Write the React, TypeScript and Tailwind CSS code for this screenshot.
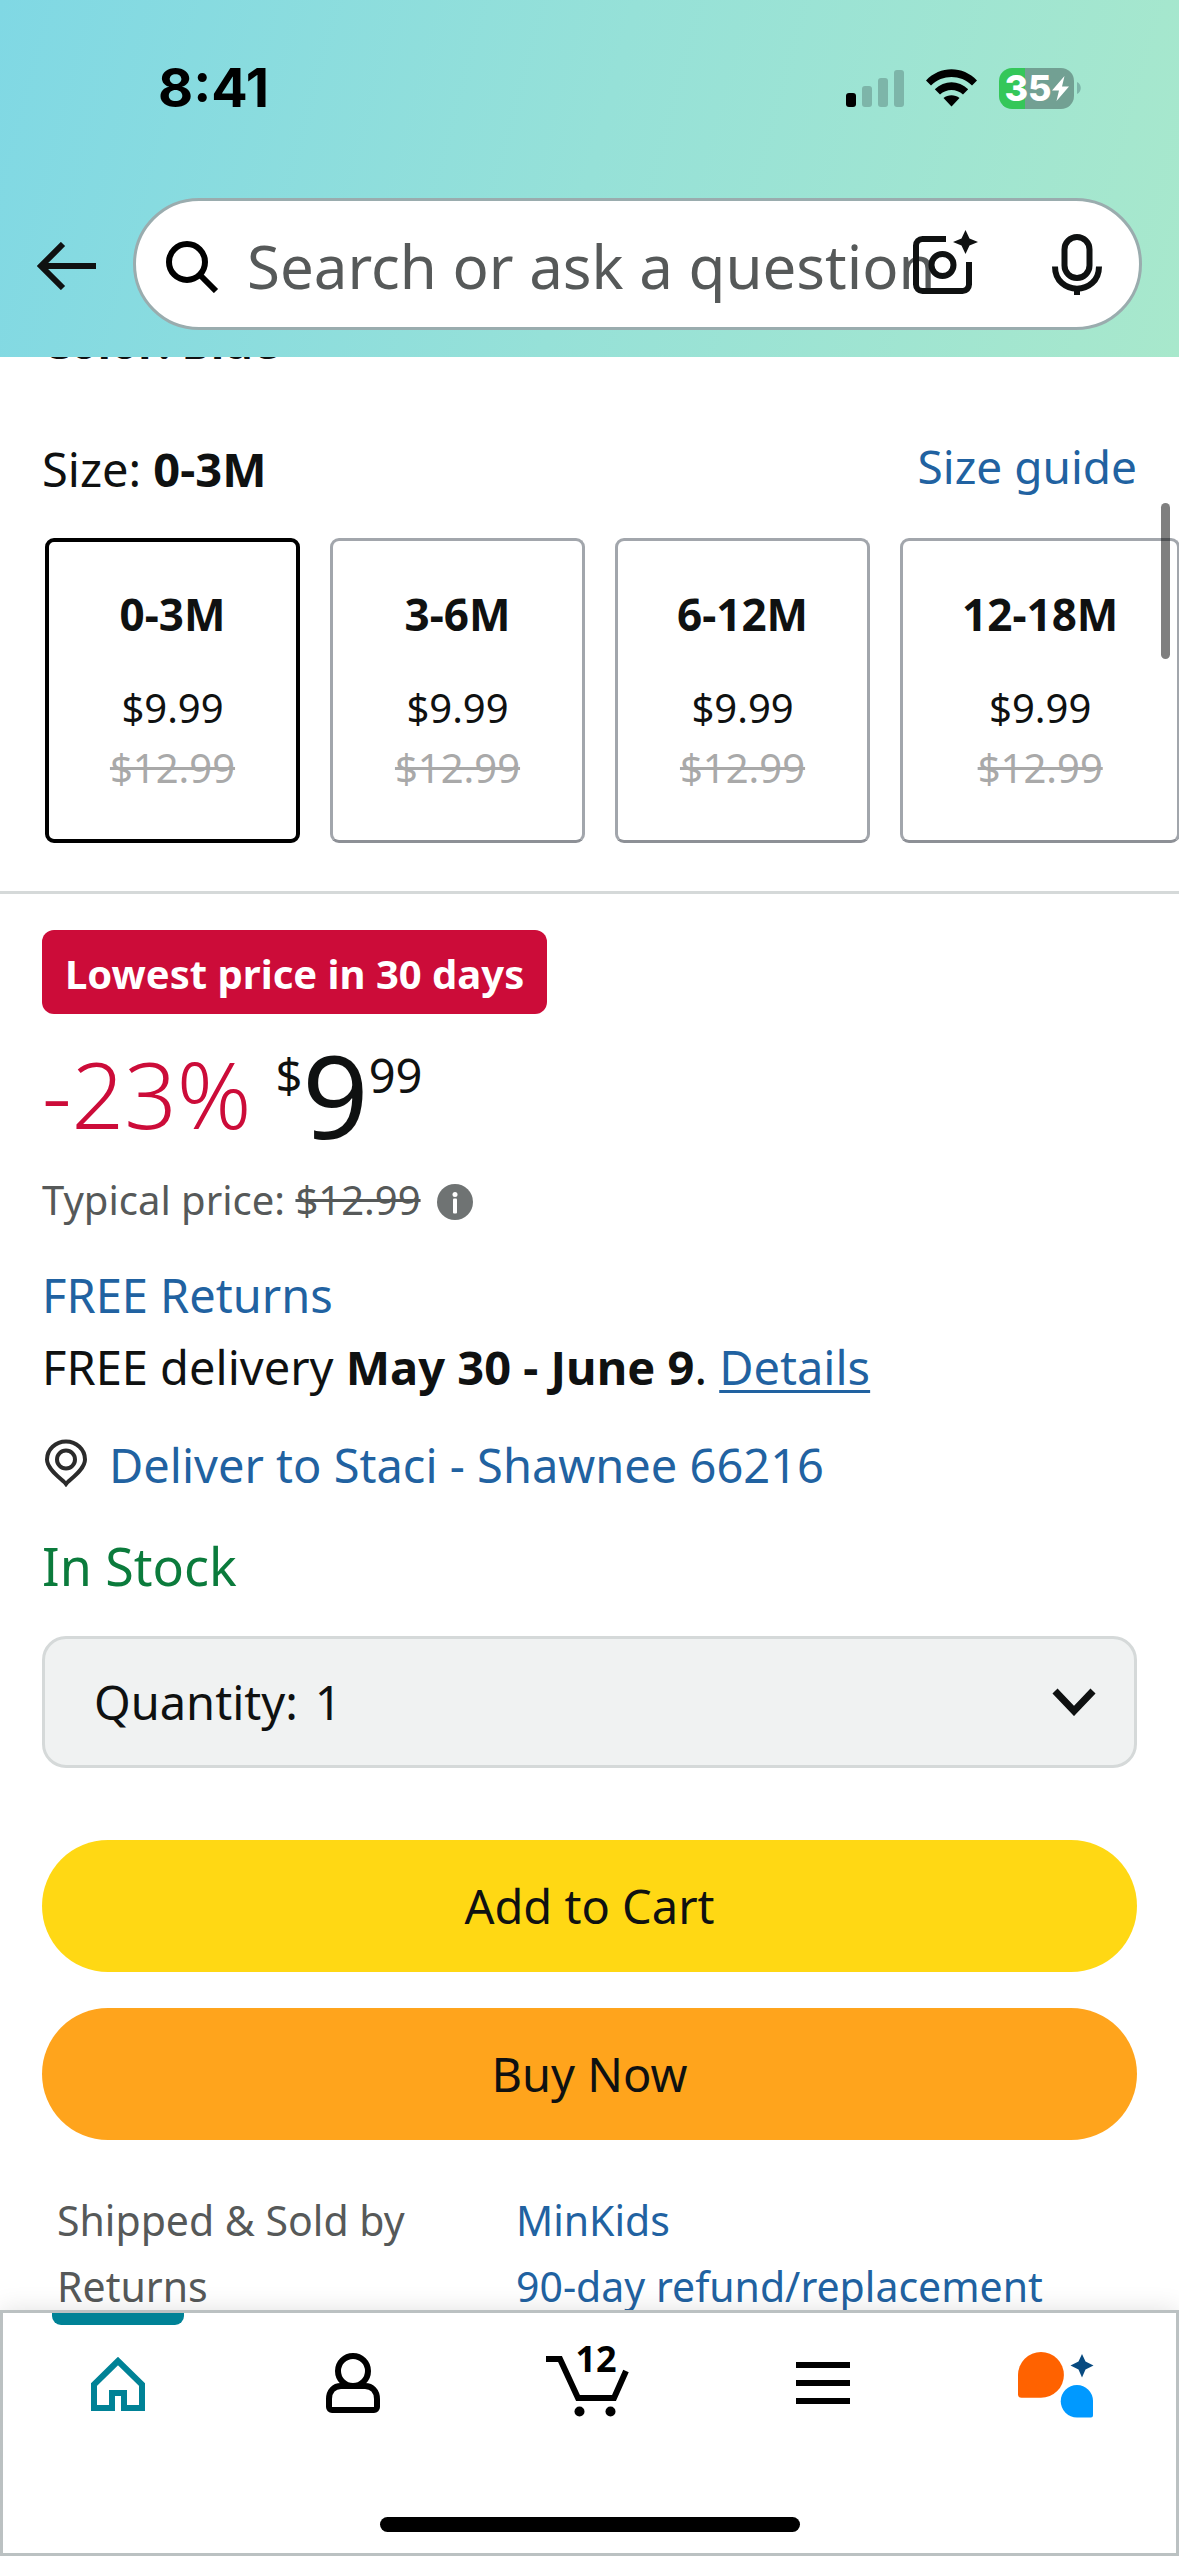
import { useState } from 'react';
import clsx from 'clsx';

interface SizeOption {
  name: string;
  price: string;
  listPrice: string;
}

const SIZES: SizeOption[] = [
  { name: '0-3M', price: '$9.99', listPrice: '$12.99' },
  { name: '3-6M', price: '$9.99', listPrice: '$12.99' },
  { name: '6-12M', price: '$9.99', listPrice: '$12.99' },
  { name: '12-18M', price: '$9.99', listPrice: '$12.99' },
];

function StatusBar() {
  return (
    <div className="flex items-center justify-between pl-[158px] pr-[98px] pt-14">
      <span className="font-['Inter',sans-serif] text-[54px] font-bold leading-[64px] text-black">
        8:41
      </span>
      <div className="flex items-center">
        {/* Signal */}
        <svg className="h-[37px] w-[58px]" viewBox="0 0 58 37" aria-hidden="true">
          <rect x="0" y="23" width="10" height="14" rx="3" fill="#000" />
          <g fill="#7db5a9">
            <rect x="16" y="16" width="10" height="21" rx="3" />
            <rect x="32" y="8" width="10" height="29" rx="3" />
            <rect x="48" y="0" width="10" height="37" rx="3" />
          </g>
        </svg>
        {/* Wifi */}
        <svg className="ml-[22px] h-[38px] w-[51px]" viewBox="0 0 51 38" aria-hidden="true">
          <path d="M0 11.5C14-3.5 37-3.5 51 11.5L46 16.500C34.500 5.200 16.500 5.200 5 16.500Z" />
          <path d="M8.800 20.300C18.500 11 32.500 11 42.200 20.300L37 25.500C30.500 19.500 20.500 19.500 14 25.500Z" />
          <path d="M17.500 29C22 25.300 29 25.300 33.500 29L25.500 37.500Z" />
        </svg>
        {/* Battery */}
        <div className="ml-[22px] flex h-[41px] w-[75px] items-center justify-center rounded-[13px] bg-linear-to-r from-[#34c759] from-35% to-[#72a093] to-35% text-white">
          <span className="font-['Inter',sans-serif] text-[36px] font-extrabold leading-none">35</span>
          <svg className="h-[25px] w-[17px]" viewBox="0 0 17 25" fill="currentColor" aria-hidden="true">
            <path d="M12.500 0 0 14.500h7L4.500 25 17 10.500h-7Z" />
          </svg>
        </div>
        <svg className="ml-[3px] h-3 w-1" viewBox="0 0 4 12" aria-hidden="true">
          <path d="M0 0C5 2 5 10 0 12Z" fill="#7db5a9" />
        </svg>
      </div>
    </div>
  );
}

function Header() {
  return (
    <header className="h-[357px] shrink-0 bg-[linear-gradient(105deg,#80d8e4,#96e1d8_50%,#a8e8cc)]">
      <StatusBar />
      <div className="mt-[78px] flex items-center pl-9 pr-[37px]">
        <button type="button" aria-label="Back" className="pt-1">
          <svg className="h-12 w-[60px]" viewBox="0 0 60 48" fill="none" stroke="#0f1111" strokeWidth="6" aria-hidden="true">
            <path d="M60 24H5M27 2 5 24l22 22" />
          </svg>
        </button>
        <div className="relative ml-[37px] flex h-[132px] flex-1 items-center rounded-full border-[3px] border-[#9aacae] bg-white pl-[30px] pt-1">
          <svg className="h-[53px] w-[54px] shrink-0" viewBox="0 0 54 53" fill="none" stroke="#000" strokeWidth="6" aria-hidden="true">
            <circle cx="21" cy="22" r="18" />
            <path d="m34 35 16 16" />
          </svg>
          <input
            type="search"
            aria-label="Search"
            placeholder="Search or ask a question"
            className="ml-[27px] min-w-0 flex-1 bg-transparent text-[60px] leading-[80px] outline-none placeholder:text-[#565959]"
          />
          <div className="absolute right-[37px] top-7 flex items-start gap-[74px]">
            <button type="button" aria-label="Search with a photo">
              <svg className="h-[66px] w-[65px]" viewBox="0 0 65 66" fill="none" stroke="#0f1111" strokeWidth="6" aria-hidden="true">
                <path d="M33 10H9.500A6.500 6.500 0 0 0 3 16.500V55.500A6.500 6.500 0 0 0 9.500 62H49.500A6.500 6.500 0 0 0 56 55.500V33" />
                <circle cx="29.500" cy="36" r="11" />
                <path d="M52.500 1 56.500 9.500 65 13 56.500 16.500 52.500 25 48.500 16.500 40 13 48.500 9.500Z" fill="#0f1111" stroke="none" />
              </svg>
            </button>
            <button type="button" aria-label="Search by voice">
              <svg className="h-[66px] w-[50px]" viewBox="0 0 50 66" fill="none" stroke="#0f1111" strokeWidth="6" aria-hidden="true">
                <rect x="12.500" y="8" width="25" height="41" rx="12.500" />
                <path d="M3 37.500C3 67 47 67 47 37.500M25 59v7" />
              </svg>
            </button>
          </div>
        </div>
      </div>
    </header>
  );
}

function SizePicker() {
  const [selected, setSelected] = useState('0-3M');

  return (
    <section className="border-b-[3px] border-[#d5d9d9] pb-12">
      <div className="px-[42px]">
        <p className="-mt-[45px] text-[44px] font-bold">Color: Blue</p>
        <div className="mt-[67px] flex items-start justify-between">
          <p>
            Size: <b>{selected}</b>
          </p>
          <a href="#size-guide" className="text-[46px] leading-[54px] text-[#2162a1]">
            Size guide
          </a>
        </div>
      </div>
      <div className="mt-[39px] flex gap-[30px] overflow-hidden pl-[45px]">
        {SIZES.map((size) => (
          <button
            key={size.name}
            type="button"
            aria-pressed={size.name === selected}
            onClick={() => setSelected(size.name)}
            className={clsx(
              'flex h-[305px] min-w-[255px] shrink-0 flex-col items-center justify-center rounded-[9px] px-[59px] pt-1',
              size.name === selected
                ? 'border-4 border-black'
                : 'border-[3px] border-[#a2a6ac] border-b-[#8d9096]',
            )}
          >
            <span className="text-[44px] font-bold leading-[52px]">{size.name}</span>
            <span className="mt-[38px] text-[40px] leading-[60px]">{size.price}</span>
            <s className="text-[40px] leading-[60px] text-[#a9a9a9] decoration-[3px]">{size.listPrice}</s>
          </button>
        ))}
      </div>
    </section>
  );
}

function BuyBox() {
  return (
    <section className="px-[42px] pt-9">
      <span className="inline-block rounded-[12px] bg-[#cc0c39] px-[23px] pt-1 align-top text-[40px] font-bold leading-[80px] text-white">
        Lowest price in 30 days
      </span>

      {/* Price */}
      <div className="mt-5 flex h-[120px] items-center">
        <span className="text-[92px] font-light text-[#cc0c39]">-23%</span>
        <span className="ml-6 self-start text-[47px] leading-[82px]">$</span>
        <span className="text-[116px]">9</span>
        <span className="self-start text-[47px] leading-[82px]">99</span>
      </div>
      <div className="mt-[17px] flex items-center text-[40px] leading-[58px] text-[#565959]">
        <span>
          Typical price: <s className="decoration-[3px]">$12.99</s>
        </span>
        <button type="button" aria-label="About this price" className="ml-4 pt-1">
          <svg className="h-9 w-9" viewBox="0 0 36 36" aria-hidden="true">
            <circle cx="18" cy="18" r="18" fill="#6f7373" />
            <circle cx="18" cy="10.500" r="2.500" fill="#fff" />
            <rect x="16" y="14.500" width="4" height="15" rx="1" fill="#fff" />
          </svg>
        </button>
      </div>

      {/* Delivery */}
      <p className="mt-9">
        <a href="#returns" className="text-[#2162a1]">FREE Returns</a>
      </p>
      <p className="mt-3">
        FREE delivery <b>May 30 - June 9</b>.{' '}
        <a href="#delivery" className="text-[#2162a1] underline decoration-[3px] underline-offset-[5px]">
          Details
        </a>
      </p>
      <a href="#address" className="mt-[38px] flex items-center gap-[19px] text-[#2162a1]">
        <svg className="mb-1 h-12 w-12" viewBox="0 0 48 48" fill="none" stroke="#2b2b2b" strokeWidth="4" aria-hidden="true">
          <path d="M24 45C21 41 5 31 5 20.500A19 18 0 0 1 43 20.500C43 31 27 41 24 45Z" />
          <circle cx="24" cy="20.500" r="9" />
        </svg>
        Deliver to Staci - Shawnee 66216
      </a>
      <p className="mt-[39px] text-[52px] leading-[64px] text-[#0b7b3c]">In Stock</p>

      <div className="mt-[38px] flex h-[132px] items-center rounded-[24px] border-[3px] border-[#d5d9d9] bg-[#f0f2f2] px-[49px]">
        <label htmlFor="quantity">Quantity:</label>
        <select id="quantity" className="ml-[17px] flex-1 appearance-none bg-transparent outline-none">
          <option>1</option>
          <option>2</option>
          <option>3</option>
        </select>
        <svg className="-mr-3 h-7 w-[46px] shrink-0" viewBox="0 0 46 28" fill="none" stroke="#0f1111" strokeWidth="7" aria-hidden="true">
          <path d="m4 3 19 20L42 3" />
        </svg>
      </div>

      <button type="button" className="mt-[72px] block h-[132px] w-full rounded-full bg-[#ffd814]">
        Add to Cart
      </button>
      <button type="button" className="mt-9 block h-[132px] w-full rounded-full bg-[#ffa41c]">
        Buy Now
      </button>

      <dl className="mt-[47px] grid grid-cols-[459px_1fr] pl-[15px] text-[41px] leading-[66px] text-[#565959]">
        <dt>Shipped &amp; Sold by</dt>
        <dd>
          <a href="#seller" className="text-[#2162a1]">MinKids</a>
        </dd>
        <dt>Returns</dt>
        <dd>
          <a href="#policy" className="text-[#2162a1]">90-day refund/replacement</a>
        </dd>
      </dl>
    </section>
  );
}

function BottomNav() {
  return (
    <nav className="relative flex h-[246px] shrink-0 flex-col border-[3px] border-[#bbc1c2] bg-white shadow-[0_0_24px_rgba(15,17,17,0.12)]">
      <div className="-ml-[3px] grid grid-cols-5 justify-items-center">
        <a href="#home" aria-label="Home" className="flex flex-col items-center">
          <span className="h-3 w-[132px] rounded-b-[9px] bg-[#008296]" />
          <svg className="mt-8 h-[54px] w-[54px]" viewBox="0 0 54 54" fill="none" stroke="#008296" strokeWidth="6" aria-hidden="true">
            <path d="M27 4 3 27.500V51H21V36H33V51H51V27.500Z" />
          </svg>
        </a>
        <a href="#account" aria-label="Account" className="pt-10">
          <svg className="h-[60px] w-[54px]" viewBox="0 0 54 60" fill="none" stroke="#000" strokeWidth="6" aria-hidden="true">
            <ellipse cx="27" cy="18" rx="15" ry="15" />
            <path d="M15 33H39C46 33 51 38 51 46V54A3 3 0 0 1 48 57H6A3 3 0 0 1 3 54V46C3 38 8 33 15 33Z" />
          </svg>
        </a>
        <a href="#cart" aria-label="Cart, 12 items" className="relative pt-[43px]">
          <svg className="h-[61px] w-[83px]" viewBox="0 0 83 61" fill="none" stroke="#000" strokeWidth="6" aria-hidden="true">
            <path d="M0 3H14L32 42H68L80 15" />
            <circle cx="33.500" cy="55.500" r="5" fill="#000" stroke="none" />
            <circle cx="64.500" cy="55.500" r="5" fill="#000" stroke="none" />
          </svg>
          <span className="absolute left-[29px] top-[26px] text-[36px] font-bold leading-10 text-black">12</span>
        </a>
        <button type="button" aria-label="Menu" className="self-start pt-[49px]">
          <svg className="h-[42px] w-[54px]" viewBox="0 0 54 42" stroke="#000" strokeWidth="6" aria-hidden="true">
            <path d="M0 3H54M0 21H54M0 39H54" />
          </svg>
        </button>
        <button type="button" aria-label="Assistant" className="self-start pt-[39px]">
          <svg className="h-[66px] w-[80px]" viewBox="0 0 80 66" aria-hidden="true">
            <path d="M23 0A22.800 22.800 0 0 1 23 45.800H3.500A3.500 3.500 0 0 1 0 42.300V23A23 23 0 0 1 23 0Z" fill="#ff6200" />
            <path d="M59 33A16 16 0 0 0 59 65.500H73A2 2 0 0 0 75 63.500V49A16 16 0 0 0 59 33Z" fill="#0099ff" />
            <path d="M64 2 67.500 9.500 75.500 13.500 67.500 17.500 64 25.500 60.500 17.500 52.500 13.500 60.500 9.500Z" fill="#084a80" />
          </svg>
        </button>
      </div>
      <div className="mx-auto mb-[21px] mt-auto h-[15px] w-[420px] rounded-full bg-black" />
    </nav>
  );
}

export default function App() {
  return (
    <div className="flex h-screen flex-col overflow-hidden bg-white font-['Noto_Sans',sans-serif] text-[47px] leading-[60px] text-[#0f1111]">
      <Header />
      <main className="relative min-h-0 flex-1 overflow-hidden">
        <SizePicker />
        <BuyBox />
        {/* Scroll indicator */}
        <div className="absolute right-[9px] top-[146px] h-[156px] w-[9px] rounded-full bg-black/50" />
      </main>
      <BottomNav />
    </div>
  );
}
